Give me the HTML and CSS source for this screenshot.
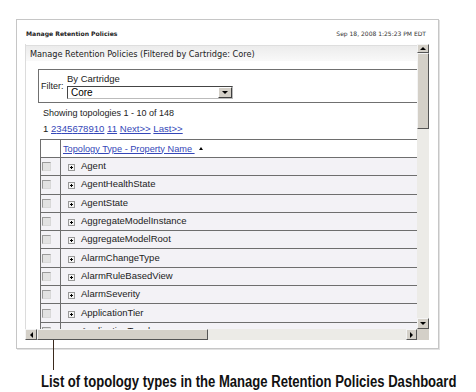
FILE: index.html
```html
<!DOCTYPE html>
<html>
<head>
<meta charset="utf-8">
<link rel="stylesheet" href="styles.css">
</head>
<body>
<div class="frame">
  <div class="frame-head">
    <span class="title">Manage Retention Policies</span>
    <span class="date">Sep 18, 2008 1:25:23 PM EDT</span>
  </div>
  <div class="viewport">
    <div class="content">
      <div class="panel-head">Manage Retention Policies (Filtered by Cartridge: Core)</div>
      <div class="filter">
        <span class="filter-label">Filter:</span>
        <div class="filter-field">
          <span class="field-label">By Cartridge</span>
          <div class="select"><span class="select-value">Core</span><span class="select-btn"><span class="down-tri"></span></span></div>
        </div>
      </div>
      <p class="showing">Showing topologies 1 - 10 of 148</p>
      <div class="pager"><span class="cur">1</span> <a>2</a><a>3</a><a>4</a><a>5</a><a>6</a><a>7</a><a>8</a><a>9</a><a>10</a> <a>11</a> <a>Next&gt;&gt;</a> <a>Last&gt;&gt;</a></div>
      <table class="grid">
        <tr class="head"><td class="c1"></td><td class="c2"><a class="sort">Topology Type - Property Name </a><span class="up-tri"></span></td></tr>
        <tr><td class="c1"><span class="cb"></span></td><td class="c2"><span class="plus"></span>Agent</td></tr>
        <tr><td class="c1"><span class="cb"></span></td><td class="c2"><span class="plus"></span>AgentHealthState</td></tr>
        <tr><td class="c1"><span class="cb"></span></td><td class="c2"><span class="plus"></span>AgentState</td></tr>
        <tr><td class="c1"><span class="cb"></span></td><td class="c2"><span class="plus"></span>AggregateModelInstance</td></tr>
        <tr><td class="c1"><span class="cb"></span></td><td class="c2"><span class="plus"></span>AggregateModelRoot</td></tr>
        <tr><td class="c1"><span class="cb"></span></td><td class="c2"><span class="plus"></span>AlarmChangeType</td></tr>
        <tr><td class="c1"><span class="cb"></span></td><td class="c2"><span class="plus"></span>AlarmRuleBasedView</td></tr>
        <tr><td class="c1"><span class="cb"></span></td><td class="c2"><span class="plus"></span>AlarmSeverity</td></tr>
        <tr><td class="c1"><span class="cb"></span></td><td class="c2"><span class="plus"></span>ApplicationTier</td></tr>
        <tr><td class="c1"><span class="cb"></span></td><td class="c2"><span class="plus"></span>ApplicationTopology</td></tr>
      </table>
    </div>
    <div class="vbar">
      <div class="sb-btn vup"><span class="up-tri"></span></div>
      <div class="sb-thumb vthumb"></div>
      <div class="sb-track"></div>
      <div class="sb-btn vdown"><span class="down-tri"></span></div>
    </div>
    <div class="hbar">
      <div class="sb-btn hleft"><span class="left-tri"></span></div>
      <div class="sb-thumb hthumb"></div>
      <div class="sb-track"></div>
      <div class="sb-btn hright"><span class="right-tri"></span></div>
    </div>
    <div class="corner"></div>
  </div>
</div>
<div class="callout-line"></div>
<p class="caption">List of topology types in the Manage Retention Policies Dashboard</p>
</body>
</html>
```

FILE: styles.css
```css
html, body { margin: 0; padding: 0; background: #fff; }
body { font-family: "Liberation Sans", Arial, sans-serif; color: #000; position: relative; width: 476px; height: 392px; overflow: hidden; }

.frame {
  margin: 19px 0 0 16px;
  width: 423px;
  height: 330px;
  box-sizing: border-box;
  border: 1px solid #c6c6c6;
  box-shadow: 1px 1px 0 #e2e2e2;
  display: flex;
  flex-direction: column;
}
.frame-head {
  height: 24px;
  box-sizing: border-box;
  padding: 10px 12px 0 9px;
  display: flex;
  justify-content: space-between;
  line-height: 8px;
}
.title { font-family: "DejaVu Sans", Verdana, sans-serif; font-weight: bold; font-size: 6.1px; color: #222; }
.date { font-family: "DejaVu Sans", Verdana, sans-serif; font-size: 6px; color: #333; }

.viewport {
  margin-left: 8px;
  width: 404px;
  height: 296px;
  display: grid;
  grid-template-columns: 392px 12px;
  grid-template-rows: 285px 11px;
}
.content {
  overflow: hidden;
  border-left: 1px solid #dcdcdc;
  padding-top: 1px;
  box-sizing: border-box;
}
.panel-head {
  height: 16px;
  box-sizing: border-box;
  border-top: 1px solid #dedede;
  background: linear-gradient(#ececec, #f9f9f9);
  font-family: "DejaVu Sans", Verdana, sans-serif;
  font-size: 8.2px;
  line-height: 17px;
  padding-left: 4px;
  white-space: nowrap;
  color: #222;
}
.filter {
  margin: 8px 0 0 12px;
  width: 420px;
  height: 34px;
  box-sizing: border-box;
  border: 1px solid #707070;
  display: flex;
  font-size: 9px;
}
.filter-label { width: 26px; padding: 11px 0 0 2px; color: #222; }
.filter-field { display: flex; flex-direction: column; padding-top: 3px; }
.field-label { line-height: 12px; font-size: 9.5px; color: #222; }
.select {
  margin-top: 1px;
  width: 166px;
  height: 13px;
  box-sizing: border-box;
  border: 1px solid #444;
  border-right-color: #bbb;
  border-bottom-color: #bbb;
  display: flex;
  justify-content: space-between;
  background: #fff;
}
.select-value { font-size: 10px; line-height: 11px; padding-left: 3px; }
.select-btn {
  width: 14px;
  box-sizing: border-box;
  background: #d4d0c8;
  border: 1px solid #fff;
  border-right-color: #404040;
  border-bottom-color: #404040;
  display: flex;
  align-items: center;
  justify-content: center;
}
.down-tri { width: 0; height: 0; border-left: 3px solid transparent; border-right: 3px solid transparent; border-top: 3px solid #000; }
.up-tri { width: 0; height: 0; border-left: 3px solid transparent; border-right: 3px solid transparent; border-bottom: 3px solid #000; }
.left-tri { width: 0; height: 0; border-top: 3px solid transparent; border-bottom: 3px solid transparent; border-right: 3px solid #000; }
.right-tri { width: 0; height: 0; border-top: 3px solid transparent; border-bottom: 3px solid transparent; border-left: 3px solid #000; }

.showing { margin: 4px 0 0 17px; font-size: 9px; line-height: 12px; color: #222; }
.pager { margin: 4px 0 0 17px; font-size: 9.6px; line-height: 12px; white-space: nowrap; color: #222; }
.pager a { color: #3447b8; text-decoration: underline; }

.grid {
  margin: 4px 0 0 14px;
  width: 420px;
  border-collapse: separate;
  border-spacing: 0;
  border-top: 1px solid #6e6e6e;
  border-left: 1px solid #6e6e6e;
  font-size: 9.5px;
}
.grid td {
  border-right: 1px solid #6e6e6e;
  border-bottom: 1px solid #6e6e6e;
  height: 18.3px;
  padding: 0;
  box-sizing: border-box;
  background: #f3f2f6;
  color: #222;
  white-space: nowrap;
}
.grid tr.head td { background: #fff; height: 18px; }
.grid .c1 { width: 20px; padding-left: 1px; vertical-align: middle; }
.grid .c2 { padding-left: 7px; vertical-align: middle; padding-bottom: 2px; }
.grid tr.head .c2 { padding-left: 2px; padding-bottom: 1px; }
.sort { color: #3447b8; text-decoration: underline; font-size: 9.2px; }
.grid .head .up-tri { display: inline-block; margin-left: 4px; vertical-align: 2px; border-left-width: 2.5px; border-right-width: 2.5px; }
.cb {
  display: block;
  width: 9px;
  height: 9px;
  box-sizing: border-box;
  border: 1px solid #9a9a9a;
  border-right-color: #d8d8d8;
  border-bottom-color: #d8d8d8;
  background: #e2e2e2;
}
.plus {
  display: inline-block;
  width: 7px;
  height: 7px;
  box-sizing: border-box;
  border: 1px solid #999;
  background: linear-gradient(#000, #000) center / 3px 1px no-repeat, linear-gradient(#000, #000) center / 1px 3px no-repeat, #f4f4f4;
  margin-right: 6px;
  vertical-align: -2px;
}

.vbar { display: flex; flex-direction: column; background: #ecebe7; }
.hbar { display: flex; background: #ecebe7; }
.sb-btn, .sb-thumb, .corner {
  background: #d4d0c8;
  box-sizing: border-box;
  border: 1px solid #f4f4f4;
  border-right-color: #555;
  border-bottom-color: #555;
}
.sb-btn { display: flex; align-items: center; justify-content: center; }
.vup { height: 9px; }
.vthumb { height: 76px; }
.vdown { height: 11px; }
.vbar .sb-track { flex: 1; }
.hleft { width: 12px; }
.hthumb { width: 171px; }
.hbar .sb-track { flex: 1; }
.hright { width: 11px; }
.corner { border: none; background: #d4d0c8; }

.callout-line { position: absolute; left: 53px; top: 340px; width: 1px; height: 30px; background: #3b2a1d; }
.caption {
  display: inline-block;
  margin: 25px 0 0 41px;
  font-family: "Liberation Sans", Arial, sans-serif;
  font-weight: bold;
  font-size: 16px;
  line-height: 16px;
  white-space: nowrap;
  color: #111;
  transform: scaleX(0.817);
  transform-origin: 0 0;
}
```
